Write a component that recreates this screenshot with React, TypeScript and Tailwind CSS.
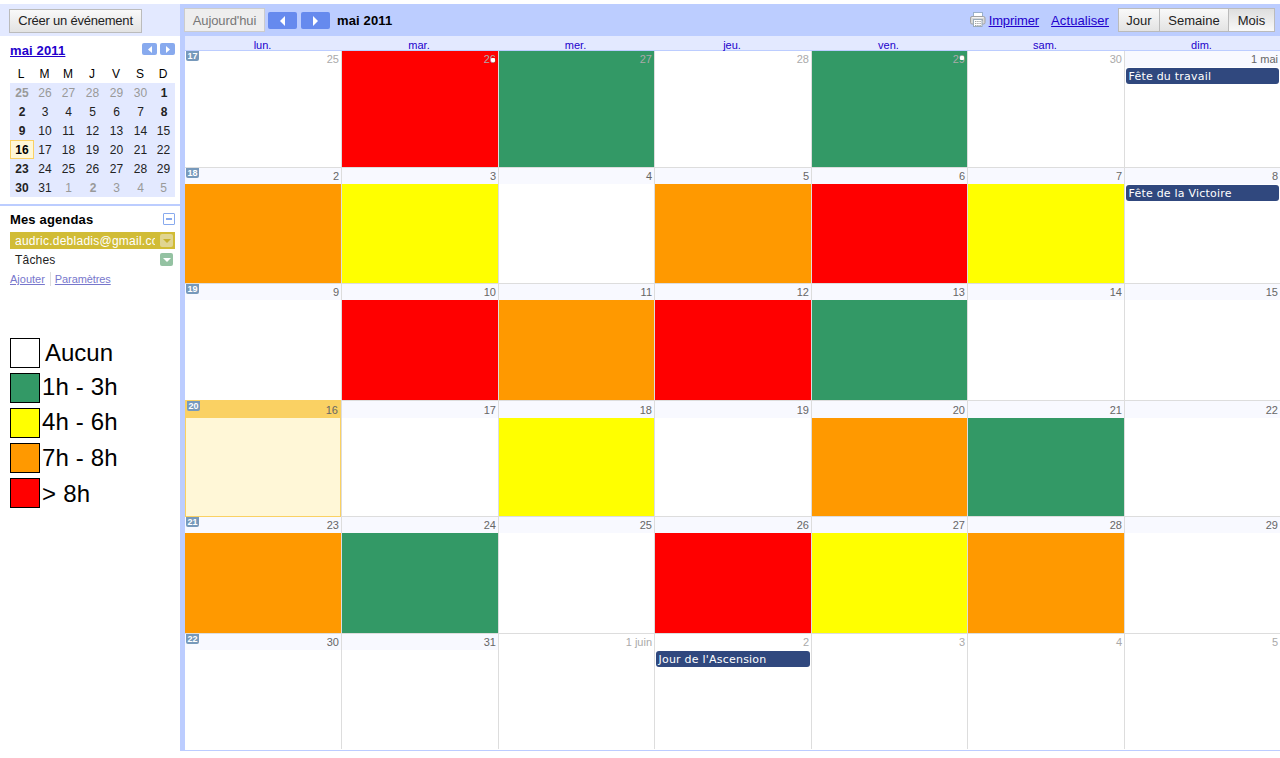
import type { ReactNode } from "react";

const WEEKDAYS = ["lun.", "mar.", "mer.", "jeu.", "ven.", "sam.", "dim."];

type Tone = "red" | "green" | "orange" | "yellow";

const TONES: Record<Tone, string> = {
  red: "bg-[#ff0000]",
  green: "bg-[#339966]",
  orange: "bg-[#ff9900]",
  yellow: "bg-[#ffff00]",
};

type Day = {
  label: string;
  tone?: Tone;
  outside?: boolean;
  today?: boolean;
  event?: string;
  dot?: string;
};

type Week = { number: number; days: Day[]; head: string };

const WEEKS: Week[] = [
  {
    number: 17,
    head: "h-[16px]",
    days: [
      { label: "25", outside: true },
      { label: "26", outside: true, tone: "red", dot: "right-[3px] top-[7px]" },
      { label: "27", outside: true, tone: "green" },
      { label: "28", outside: true },
      { label: "29", outside: true, tone: "green", dot: "right-[3px] top-[5px]" },
      { label: "30", outside: true },
      { label: "1 mai", event: "Fête du travail" },
    ],
  },
  {
    number: 18,
    head: "h-[16px]",
    days: [
      { label: "2", tone: "orange" },
      { label: "3", tone: "yellow" },
      { label: "4" },
      { label: "5", tone: "orange" },
      { label: "6", tone: "red" },
      { label: "7", tone: "yellow" },
      { label: "8", event: "Fête de la Victoire" },
    ],
  },
  {
    number: 19,
    head: "h-[16px]",
    days: [
      { label: "9" },
      { label: "10", tone: "red" },
      { label: "11", tone: "orange" },
      { label: "12", tone: "red" },
      { label: "13", tone: "green" },
      { label: "14" },
      { label: "15" },
    ],
  },
  {
    number: 20,
    head: "h-[17px] pt-px",
    days: [
      { label: "16", today: true },
      { label: "17" },
      { label: "18", tone: "yellow" },
      { label: "19" },
      { label: "20", tone: "orange" },
      { label: "21", tone: "green" },
      { label: "22" },
    ],
  },
  {
    number: 21,
    head: "h-[16px]",
    days: [
      { label: "23", tone: "orange" },
      { label: "24", tone: "green" },
      { label: "25" },
      { label: "26", tone: "red" },
      { label: "27", tone: "yellow" },
      { label: "28", tone: "orange" },
      { label: "29" },
    ],
  },
  {
    number: 22,
    head: "h-[16px]",
    days: [
      { label: "30" },
      { label: "31" },
      { label: "1 juin", outside: true },
      { label: "2", outside: true, event: "Jour de l'Ascension" },
      { label: "3", outside: true },
      { label: "4", outside: true },
      { label: "5", outside: true },
    ],
  },
];

const MINI_WEEKS = [
  [25, 26, 27, 28, 29, 30, 1],
  [2, 3, 4, 5, 6, 7, 8],
  [9, 10, 11, 12, 13, 14, 15],
  [16, 17, 18, 19, 20, 21, 22],
  [23, 24, 25, 26, 27, 28, 29],
  [30, 31, 1, 2, 3, 4, 5],
];

const LEGEND = [
  { label: "Aucun", color: "bg-white", text: "pl-[5px]" },
  { label: "1h - 3h", color: "bg-[#339966]", text: "pl-[2px] pb-[2px] tracking-[0.15px]" },
  { label: "4h - 6h", color: "bg-[#ffff00]", text: "pl-[2px] pb-[2px] tracking-[0.15px]" },
  { label: "7h - 8h", color: "bg-[#ff9900]", text: "pl-[2px] tracking-[0.15px]" },
  { label: "> 8h", color: "bg-[#ff0000]", text: "pl-[2px] pt-[2px] tracking-[0.25px]" },
];

function Arrow({ dir, small = false }: { dir: "left" | "right"; small?: boolean }) {
  const points = dir === "left" ? "5,0 5,10 0,5" : "0,0 0,10 5,5";
  return (
    <svg
      viewBox="0 0 5 10"
      preserveAspectRatio="none"
      className={small ? "h-[7px] w-[4px]" : "h-[10px] w-[5px]"}
      fill="#fff"
    >
      <polygon points={points} />
    </svg>
  );
}

function MenuButton({ className, arrow }: { className: string; arrow: string }) {
  return (
    <span className={`flex h-[13px] w-[13px] shrink-0 items-center justify-center rounded-[2px] ${className}`}>
      <svg viewBox="0 0 8 4" className="h-[4px] w-[8px]" fill={arrow}>
        <polygon points="0,0 8,0 4,4" />
      </svg>
    </span>
  );
}

function Printer() {
  return (
    <svg viewBox="0 0 16 16" className="h-4 w-4">
      <rect x="3.5" y="0.5" width="9" height="5" fill="#fff" stroke="#99b0cc" />
      <rect x="0.5" y="4.5" width="14.5" height="7.5" rx="1.5" fill="#d8d8d8" stroke="#a3a3a3" />
      <path d="M2 5.5h11.5" stroke="#f4f4f4" />
      <path d="M3 8h10" stroke="#888" />
      <rect x="3.5" y="7.5" width="8.5" height="7" fill="#fff" stroke="#9aabba" />
      <path d="M5 9.5h6M5 11.5h6M5 13.5h6" stroke="#9a9a9a" strokeDasharray="1.4 0.8" strokeWidth="0.9" />
    </svg>
  );
}

function MiniCalendar() {
  return (
    <div className="mt-[8px] grid grid-cols-[24px_23px_24px_24px_24px_24px_22px] text-center text-[12px] leading-[20px]">
      {["L", "M", "M", "J", "V", "S", "D"].map((d, i) => (
        <span key={i} className="h-[19px]">
          <span className="relative right-px">{d}</span>
        </span>
      ))}
      {MINI_WEEKS.flatMap((week, r) =>
        week.map((n, c) => {
          const outside = (r === 0 && c < 6) || (r === 5 && c > 1);
          const bold = c === 0 || (r < 2 && c === 6) || (r === 5 && c === 3);
          const today = n === 16;
          return (
            <span
              key={`${r}-${c}`}
              className={`h-[19px] ${bold ? "font-bold" : "pr-px"} ${outside ? "text-[#999]" : "text-[#222]"} ${
                today
                  ? "border border-[#fad163] bg-[#fff7d7] leading-[18px] text-black"
                  : "bg-[#e3e9ff]"
              }`}
            >
              {n}
            </span>
          );
        }),
      )}
    </div>
  );
}

function Sidebar() {
  return (
    <aside className="flex w-[180px] shrink-0 flex-col">
      <div className="h-8 bg-[#e3e9ff] pl-[9px] pt-1">
        <button className="h-6 w-[133px] border border-[#bbb] bg-linear-to-b from-[#f9f9f9] to-[#e3e3e3] text-[13px] leading-[22px] tracking-[-0.22px] text-[#222]">
          Créer un événement
        </button>
      </div>
      <div className="h-[168px] pl-[10px] pr-[5px] pt-[7px]">
        <div className="flex h-[13px] items-center justify-between">
          <a className="pt-[2px] text-[13px] font-bold leading-[15px] tracking-[0.15px] text-[#2200cc] underline">
            mai 2011
          </a>
          <span className="mb-px flex gap-[3px]">
            <span className="flex h-3 w-[15px] items-center justify-center rounded-[2px] bg-[#88aaee]">
              <Arrow dir="left" small />
            </span>
            <span className="flex h-3 w-[15px] items-center justify-center rounded-[2px] bg-[#88aaee]">
              <Arrow dir="right" small />
            </span>
          </span>
        </div>
        <MiniCalendar />
      </div>
      <div className="h-[2px] bg-[#bccdff]" />
      <div className="pl-[10px] pr-[5px] pt-[7px]">
        <div className="flex h-3 items-center justify-between">
          <h2 className="pt-[2px] text-[13px] font-bold leading-[14px] tracking-[0.15px] text-black">Mes agendas</h2>
          <span className="flex h-3 w-3 items-center justify-center rounded-[1px] border border-[#88aaee] bg-white">
            <span className="h-[2px] w-[6px] bg-[#88aaee]" />
          </span>
        </div>
        <div className="mt-[7px] flex h-[17px] items-center bg-[#d1bc36] pl-[5px] pr-[2px]">
          <span className="w-[140px] overflow-hidden whitespace-nowrap text-[12px] leading-[18px] tracking-[0.25px] text-white">
            audric.debladis@gmail.com
          </span>
          <span className="w-[5px] shrink-0" />
          <MenuButton className="bg-[#e0d591]" arrow="#c7b12f" />
        </div>
        <div className="mt-[2px] flex h-[17px] items-center justify-between pl-[5px] pr-[2px]">
          <span className="pt-[2px] text-[12px] leading-[17px] tracking-[0.2px] text-[#222]">Tâches</span>
          <MenuButton className="bg-[#94c2a2]" arrow="#ffffff" />
        </div>
        <div className="mt-[4px] flex h-[14px] text-[11px] leading-[14px] text-[#7777cc]">
          <a className="underline">Ajouter</a>
          <span className="ml-[5px] mr-[4px] w-px bg-[#ddd]" />
          <a className="tracking-[-0.1px] underline">Paramètres</a>
        </div>
      </div>
      <div className="mt-[52px] flex flex-col gap-[5px] pl-[10px]">
        {LEGEND.map((item) => (
          <div key={item.label} className="flex h-[30px] items-center">
            <span className={`h-[30px] w-[30px] shrink-0 border border-black ${item.color}`} />
            <span className={`whitespace-nowrap text-[24px] leading-[28px] text-black ${item.text}`}>{item.label}</span>
          </div>
        ))}
      </div>
    </aside>
  );
}

function ViewTab({ className, children }: { className: string; children: ReactNode }) {
  return (
    <button className={`h-6 border border-[#bbb] text-[13px] leading-[23px] text-[#222] ${className}`}>{children}</button>
  );
}

function Toolbar() {
  return (
    <div className="flex h-8 items-start bg-[#bccdff] pr-[5px] pt-1">
      <button className="-ml-px h-6 w-[81px] border border-[#ccc] bg-[#eee] text-[13px] leading-[23px] tracking-[-0.1px] text-[#777]">
        Aujourd'hui
      </button>
      <div className="ml-[3px] mt-[4px] flex gap-1">
        <button className="flex h-[17px] w-[29px] items-center justify-center rounded-[2px] bg-[#668aee]">
          <Arrow dir="left" />
        </button>
        <button className="flex h-[17px] w-[29px] items-center justify-center rounded-[2px] bg-[#668aee]">
          <Arrow dir="right" />
        </button>
      </div>
      <h1 className="ml-[7px] text-[13px] font-bold leading-[26px] tracking-[0.15px] text-black">mai 2011</h1>
      <div className="ml-auto flex items-start text-[13px] leading-[26px] text-[#2200cc]">
        <span className="mr-[3px] mt-[4px]">
          <Printer />
        </span>
        <a className="mr-[12px] tracking-[-0.1px] underline">Imprimer</a>
        <a className="mr-[9px] tracking-[0.08px] underline">Actualiser</a>
        <ViewTab className="w-[42px] bg-linear-to-b from-[#f9f9f9] to-[#e3e3e3]">Jour</ViewTab>
        <ViewTab className="-ml-px w-[70px] bg-linear-to-b from-[#f9f9f9] to-[#e3e3e3]">Semaine</ViewTab>
        <ViewTab className="-ml-px w-[47px] bg-linear-to-b from-[#dedede] to-[#f9f9f9]">Mois</ViewTab>
      </div>
    </div>
  );
}

function DayCell({ day, head, week, last, bottom }: { day: Day; head: string; week?: number; last: boolean; bottom: boolean }) {
  const full = day.outside && day.tone;
  const edges = `${last ? "" : "border-r"} ${bottom ? "" : "border-b"} border-[#ddd]`;
  return (
    <div className={`relative flex min-w-0 flex-col ${edges} ${full ? TONES[day.tone!] : "bg-white"}`}>
      {day.today && (
        <div className="absolute -bottom-px -top-px left-0 right-0 border border-[#fad163] bg-[#fff7d7]">
          <div className="h-[17px] bg-[#fad163]" />
        </div>
      )}
      {week && (
        <span
          className={`absolute top-0 h-[10px] w-[13px] rounded-b-[2px] bg-[#7799bb] text-center text-[9px] font-bold leading-[10px] text-white ${
            day.today ? "left-[2px]" : "left-px"
          }`}
        >
          {week}
        </span>
      )}
      <div
        className={`${head} shrink-0 whitespace-nowrap pr-[2px] text-right text-[11px] leading-[17px] ${
          day.outside ? "text-[#aaa]" : "text-[#666]"
        } ${day.outside || day.today ? "" : "bg-[#f8f9ff]"}`}
      >
        <span className={day.today ? "relative right-px" : "relative"}>{day.label}</span>
      </div>
      {day.dot && <span className={`absolute h-[4px] w-[4px] rounded-[1px] bg-white ${day.dot}`} />}
      {day.tone && !full && <div className={`flex-1 ${TONES[day.tone]}`} />}
      {day.event && (
        <div className="mx-px mt-px h-4 overflow-hidden whitespace-nowrap rounded-[3px] bg-[#30487e] pl-[2.5px] font-['DejaVu_Sans',sans-serif] text-[11px] leading-[17px] tracking-[0.22px] text-white">
          {day.event}
        </div>
      )}
    </div>
  );
}

function MonthGrid() {
  return (
    <>
      <div className="grid h-[15px] grid-cols-[156px_157px_156px_157px_156px_157px_156px] border-b border-[#bccdff] bg-[#e3e9ff] text-center text-[11px] leading-[18px] text-[#2200cc]">
        {WEEKDAYS.map((d) => (
          <span key={d} className="pr-px">
            {d}
          </span>
        ))}
      </div>
      <div className="grid grid-cols-[157px_157px_156px_157px_156px_157px_155px] grid-rows-[117px_116px_117px_116px_117px_115px]">
        {WEEKS.flatMap((week, r) =>
          week.days.map((day, c) => (
            <DayCell
              key={`${r}-${c}`}
              day={day}
              head={week.head}
              week={c === 0 ? week.number : undefined}
              last={c === 6}
              bottom={r === 5}
            />
          )),
        )}
      </div>
      <div className="mt-px h-px bg-[#bccdff]" />
    </>
  );
}

export default function App() {
  return (
    <div className="flex h-[758px] w-[1280px] overflow-hidden bg-white pt-1 font-['Liberation_Sans',Arial,sans-serif]">
      <Sidebar />
      <main className="h-[747px] w-[1100px] border-l-[5px] border-[#bccdff]">
        <Toolbar />
        <MonthGrid />
      </main>
    </div>
  );
}
